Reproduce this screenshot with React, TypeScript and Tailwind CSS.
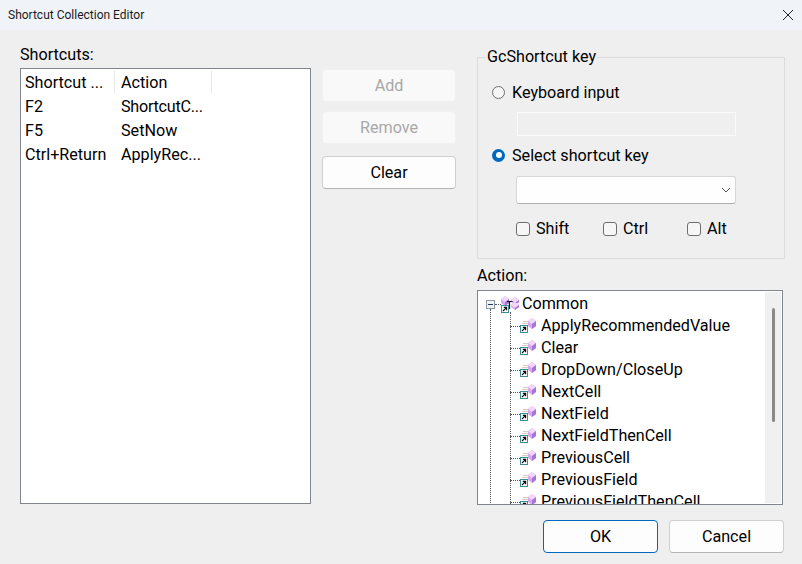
import React from "react";

const rows = [
  ["F2", "ShortcutC...", "tracking-[-0.25px]"],
  ["F5", "SetNow", ""],
  ["Ctrl+Return", "ApplyRec...", ""],
];
const actions = [
  "ApplyRecommendedValue",
  "Clear",
  "DropDown/CloseUp",
  "NextCell",
  "NextField",
  "NextFieldThenCell",
  "PreviousCell",
  "PreviousField",
  "PreviousFieldThenCell",
];

function ArrowBox({ x, y }: { x: number; y: number }) {
  return (
    <g transform={`translate(${x} ${y})`}>
      <rect x="0.5" y="0.5" width="7" height="7" fill="#fff" stroke="#3f8a96" />
      <path d="M2 6 L5.2 2.8 M2.8 2.4 H5.6 V5.2" fill="none" stroke="#000" strokeWidth="1.1" />
    </g>
  );
}

function Gem({ x, y, h = 10 }: { x: number; y: number; h?: number }) {
  return (
    <g transform={`translate(${x} ${y})`}>
      <path d={`M4 0 L8 3 V${h - 3} L4 ${h} L0 ${h - 3} V3 Z`} fill="#d8a8ec" />
      <path d="M4 0 L8 3 L4 6 L0 3 Z" fill="#f2d8f8" />
      <path d={`M4 6 L8 3 V${h - 3} L4 ${h} Z`} fill="#a874dc" />
    </g>
  );
}

function ActionIcon() {
  return (
    <svg width="16" height="16" viewBox="0 0 16 16" className="shrink-0 overflow-visible mt-[2px]">
      <path d="M3 3.5H8M2 5.5H8" stroke="#d8cfc0" strokeWidth="1" />
      <Gem x={8} y={0} h={11} />
      <ArrowBox x={0} y={7} />
    </svg>
  );
}

function CommonIcon() {
  return (
    <svg width="16" height="17" viewBox="0 0 16 17" className="shrink-0 overflow-visible mt-[2px]">
      <Gem x={0} y={0} h={10} />
      <Gem x={10} y={1} h={8} />
      <Gem x={10} y={6} h={8} />
      <path d="M6 5.5H11.5M8.5 5.5V13" stroke="#111" strokeWidth="1.2" fill="none" />
      <ArrowBox x={0} y={9} />
    </svg>
  );
}

function Check({ label, className }: { label: string; className: string }) {
  return (
    <div className={`flex items-center gap-[6px] ${className}`}>
      <span className="w-[14px] h-[14px] rounded-[3px] border border-[#6f6f6f] bg-[#f6f6f6]" />
      <span>{label}</span>
    </div>
  );
}

function Btn({ children, disabled, className = "" }: { children: React.ReactNode; disabled?: boolean; className?: string }) {
  return (
    <div
      className={`w-[134px] flex items-center justify-center rounded-[4px] border ${
        disabled ? "bg-[#f9f9f9] border-[#f1f1f1] text-[#a8a8a8]" : "bg-[#fdfdfd] border-[#d0d0d0] border-b-[#b4b4b4] text-black"
      } ${className}`}
    >
      {children}
    </div>
  );
}

export default function App() {
  return (
    <div className="w-[802px] h-[564px] overflow-hidden flex flex-col bg-[#efefef] text-[16.15px] leading-[22px] text-black font-['Roboto',sans-serif]">
      <div className="h-[30px] shrink-0 bg-[#f0f4f9] flex items-center justify-between pl-[8px] pr-[8px]">
        <span className="text-[12px] leading-[16px] text-[#1a1a1a]">Shortcut Collection Editor</span>
        <svg width="12" height="12" viewBox="0 0 12 12">
          <path d="M1 1 L11 11 M11 1 L1 11" stroke="#222" strokeWidth="1" />
        </svg>
      </div>

      <div className="h-[480px] flex">
        <div className="ml-[20px] w-[291px] flex flex-col pt-[14px]">
          <div className="h-[24px] leading-[22px]">Shortcuts:</div>
          <div className="h-[436px] bg-white border border-[#80868c]">
            <div className="flex h-[24px] mt-[1px] pt-[1px]">
              <div className="w-[94px] pl-[4px] border-r border-[#e8e8e8] leading-[24px]">Shortcut ...</div>
              <div className="w-[97px] pl-[6px] border-r border-[#e8e8e8] leading-[24px]">Action</div>
            </div>
            <div className="pt-[1px]">
              {rows.map((r) => (
                <div key={r[0]} className="flex h-[24px] leading-[24px]">
                  <div className="w-[94px] pl-[4px] whitespace-nowrap">{r[0]}</div>
                  <div className={`w-[97px] pl-[6px] whitespace-nowrap ${r[2]}`}>{r[1]}</div>
                </div>
              ))}
            </div>
          </div>
        </div>

        <div className="ml-[11px] w-[134px] flex flex-col pt-[39px]">
          <Btn disabled className="h-[33px]">Add</Btn>
          <Btn disabled className="h-[33px] mt-[9px]">Remove</Btn>
          <Btn className="h-[33px] mt-[12px]">Clear</Btn>
        </div>

        <div className="ml-[21px] w-[308px] flex flex-col pt-[16px]">
          <fieldset className="h-[213px] border border-[#dcdcdc] pl-[14px] pr-[0px]">
            <legend className="-ml-[6px] px-[1px] leading-[22px]">GcShortcut key</legend>
            <div className="flex items-center gap-[7px] h-[22px] mt-[14px]">
              <span className="w-[13px] h-[13px] -mt-[2px] rounded-full border border-[#6f6f6f] bg-[#f6f6f6]" />
              <span>Keyboard input</span>
            </div>
            <div className="ml-[25px] w-[219px] h-[24px] mt-[8px] border border-[#fafafa]" />
            <div className="flex items-center gap-[7px] h-[22px] mt-[9px]">
              <span className="w-[13px] h-[13px] -mt-[2px] rounded-full bg-[#0067c0] flex items-center justify-center">
                <span className="w-[6px] h-[6px] rounded-full bg-white" />
              </span>
              <span>Select shortcut key</span>
            </div>
            <div className="ml-[24px] w-[220px] h-[28px] mt-[9px] bg-[#fefefe] rounded-[3px] border border-[#d6d6d6] border-b-[#b0b0b0] flex items-center justify-end pr-[4px]">
              <svg width="10" height="6" viewBox="0 0 10 6">
                <path d="M1 1 L5 5 L9 1" fill="none" stroke="#555" strokeWidth="1" />
              </svg>
            </div>
            <div className="flex mt-[14px] h-[22px] ml-[24px]">
              <Check label="Shift" className="w-[87px]" />
              <Check label="Ctrl" className="w-[84px]" />
              <Check label="Alt" className="" />
            </div>
          </fieldset>

          <div className="h-[22px] mt-[6px] leading-[22px]">Action:</div>
          <div className="mt-[3px] w-[306px] h-[215px] bg-white border border-[#80868c] overflow-hidden flex">
            <div className="flex-1 relative pt-[1px] overflow-hidden">
              <div className="absolute left-[12px] top-[18px] h-[200px] border-l border-dotted border-[#555]" />
              <div className="absolute left-[32px] top-[21px] h-[200px] border-l border-dotted border-[#555]" />
              <div className="h-[22px] flex items-center relative">
                <span className="ml-[8px] mt-[3px] w-[9px] h-[9px] border border-[#8a97a5] bg-[#f2f2f2] flex items-center justify-center shrink-0">
                  <span className="w-[5px] h-[1px] bg-[#223a66]" />
                </span>
                <span className="w-[6px] mt-[3px] border-t border-dotted border-[#555]" />
                <CommonIcon />
                <span className="ml-[5px] pt-[1px]">Common</span>
              </div>
              {actions.map((a) => (
                <div key={a} className="h-[22px] flex items-center relative whitespace-nowrap">
                  <span className="ml-[32px] mt-[2px] w-[10px] border-t border-dotted border-[#555]" />
                  <ActionIcon />
                  <span className="ml-[5px] pt-[1px]">{a}</span>
                </div>
              ))}
            </div>
            <div className="w-[16px] mr-[1px] my-[1px] bg-[#f0f0f0] flex justify-center pt-[16px]">
              <div className="w-[3px] h-[114px] rounded-full bg-[#8a8a8a]" />
            </div>
          </div>
        </div>
      </div>

      <div className="flex justify-end pt-[10px] pr-[18px] gap-[11px]">
        <div className="w-[115px] h-[33px] rounded-[4px] bg-[#fdfdfd] border border-[#0067c0] flex items-center justify-center">OK</div>
        <div className="w-[115px] h-[33px] rounded-[4px] bg-[#fdfdfd] border border-[#d0d0d0] border-b-[#b4b4b4] flex items-center justify-center">Cancel</div>
      </div>
    </div>
  );
}
